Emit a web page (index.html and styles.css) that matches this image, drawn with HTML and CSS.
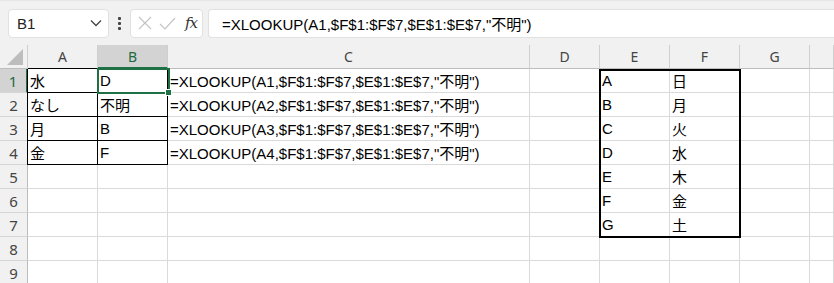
FILE: index.html
```html
<!DOCTYPE html>
<html lang="ja">
<head>
  <meta charset="UTF-8" />
  <title>XLOOKUP</title>
  <link rel="stylesheet" href="styles.css">
</head>
<body>
  <div class="toolbar">
    <div class="namebox">
      <span>B1</span>
      <svg width="12" height="8" viewBox="0 0 12 8"><path d="M1 1.5 L6 6.5 L11 1.5" fill="none" stroke="#444" stroke-width="1.3"/></svg>
    </div>
    <div class="dots"><i></i><i></i><i></i></div>
    <div class="fxbox">
      <svg width="14" height="14" viewBox="0 0 14 14"><path d="M1 1 L13 13 M13 1 L1 13" stroke="#c4c4c4" stroke-width="1.2"/></svg>
      <svg width="17" height="13" viewBox="0 0 17 13"><path d="M1 7 L6 12 L16 1" fill="none" stroke="#c4c4c4" stroke-width="1.2"/></svg>
      <span class="fx">fx</span>
    </div>
    <div class="formula">=XLOOKUP(A1,$F$1:$F$7,$E$1:$E$7,"不明")</div>
  </div>

  <div class="sheet">
    <div class="hd corner"><svg width="18" height="18" viewBox="0 0 18 18"><path d="M17 1 L17 17 L1 17 Z" fill="#bdbdbd"/></svg></div>
    <div class="hd">A</div>
    <div class="hd sel-col">B</div>
    <div class="hd">C</div>
    <div class="hd">D</div>
    <div class="hd">E</div>
    <div class="hd">F</div>
    <div class="hd">G</div>
    <div class="hd"></div>

    <div class="rh sel-row">1</div>
    <div class="c k top left">水</div>
    <div class="c k top">D</div>
    <div class="c">=XLOOKUP(A1,$F$1:$F$7,$E$1:$E$7,"不明")</div>
    <div class="c"></div>
    <div class="c">A</div>
    <div class="c">日</div>
    <div class="c"></div>
    <div class="c"></div>

    <div class="rh">2</div>
    <div class="c k left">なし</div>
    <div class="c k">不明</div>
    <div class="c">=XLOOKUP(A2,$F$1:$F$7,$E$1:$E$7,"不明")</div>
    <div class="c"></div>
    <div class="c">B</div>
    <div class="c">月</div>
    <div class="c"></div>
    <div class="c"></div>

    <div class="rh">3</div>
    <div class="c k left">月</div>
    <div class="c k">B</div>
    <div class="c">=XLOOKUP(A3,$F$1:$F$7,$E$1:$E$7,"不明")</div>
    <div class="c"></div>
    <div class="c">C</div>
    <div class="c">火</div>
    <div class="c"></div>
    <div class="c"></div>

    <div class="rh">4</div>
    <div class="c k left">金</div>
    <div class="c k">F</div>
    <div class="c">=XLOOKUP(A4,$F$1:$F$7,$E$1:$E$7,"不明")</div>
    <div class="c"></div>
    <div class="c">D</div>
    <div class="c">水</div>
    <div class="c"></div>
    <div class="c"></div>

    <div class="rh">5</div>
    <div class="c"></div><div class="c"></div><div class="c"></div><div class="c"></div>
    <div class="c">E</div><div class="c">木</div><div class="c"></div><div class="c"></div>

    <div class="rh">6</div>
    <div class="c"></div><div class="c"></div><div class="c"></div><div class="c"></div>
    <div class="c">F</div><div class="c">金</div><div class="c"></div><div class="c"></div>

    <div class="rh">7</div>
    <div class="c"></div><div class="c"></div><div class="c"></div><div class="c"></div>
    <div class="c">G</div><div class="c">土</div><div class="c"></div><div class="c"></div>

    <div class="rh">8</div>
    <div class="c"></div><div class="c"></div><div class="c"></div><div class="c"></div>
    <div class="c"></div><div class="c"></div><div class="c"></div><div class="c"></div>

    <div class="rh">9</div>
    <div class="c"></div><div class="c"></div><div class="c"></div><div class="c"></div>
    <div class="c"></div><div class="c"></div><div class="c"></div><div class="c"></div>

    <div class="table-box"></div>
    <div class="cursor"><span class="handle"></span></div>
  </div>
</body>
</html>
```

FILE: styles.css
```css
body {
  margin: 0;
  background: #fff;
  font-family: "Liberation Sans", "Noto Sans CJK JP", sans-serif;
  color: #000;
  overflow: hidden;
}
.toolbar {
  display: flex;
  align-items: center;
  height: 45px;
  padding: 0 0 0 8px;
  box-sizing: border-box;
  background: #f1f1f1;
  border-top: 1px solid #e6e6e6;
}
.namebox {
  width: 101px;
  height: 29px;
  box-sizing: border-box;
  background: #fff;
  border: 1px solid #e1e1e1;
  border-radius: 4px;
  display: flex;
  align-items: center;
  justify-content: space-between;
  padding: 0 6px 0 8px;
  font-size: 15px;
  color: #222;
}
.dots {
  width: 21px;
  display: flex;
  flex-direction: column;
  align-items: center;
  gap: 2px;
}
.dots i {
  width: 3px;
  height: 3px;
  background: #444;
  border-radius: 1px;
}
.fxbox {
  width: 73px;
  height: 29px;
  box-sizing: border-box;
  background: #fff;
  border: 1px solid #e1e1e1;
  border-radius: 4px;
  display: flex;
  align-items: center;
  padding: 0 0 0 7px;
  gap: 7px;
}
.fx {
  font-family: "DejaVu Serif", "Liberation Serif", serif;
  font-style: italic;
  font-size: 15px;
  color: #333;
  letter-spacing: -1px;
  margin-left: 2px;
}
.formula {
  flex: 1;
  height: 29px;
  margin-left: 5px;
  box-sizing: border-box;
  background: #fff;
  border: 1px solid #e1e1e1;
  border-right: none;
  border-radius: 4px 0 0 4px;
  display: flex;
  align-items: center;
  padding-left: 13px;
  font-size: 15px;
  white-space: nowrap;
}
.sheet {
  position: relative;
  display: grid;
  grid-template-columns: 28px 70px 70px 362px 70px 70px 70px 70px 24px;
  grid-template-rows: 24px repeat(9, 24px);
}
.hd, .rh {
  background: #f1f1f1;
  color: #444;
  font-family: "Noto Sans", "Liberation Sans", sans-serif;
  font-size: 14px;
  display: flex;
  align-items: center;
  justify-content: center;
  box-sizing: border-box;
}
.hd {
  border-right: 1px solid #cfcfcf;
  border-bottom: 1px solid #bdbdbd;
}
.rh {
  border-right: 1px solid #bdbdbd;
  border-bottom: 1px solid #d6d6d6;
  font-size: 15px;
}
.corner {
  justify-content: flex-end;
  align-items: flex-end;
  padding: 0 3px 2px 0;
}
.sel-col {
  background: #d3d3d3;
  color: #1e6b41;
  border-bottom: 2px solid #1e7145;
}
.sel-row {
  background: #d3d3d3;
  color: #1e6b41;
  border-right: 2px solid #1e7145;
}
.c {
  border-right: 1px solid #dadada;
  border-bottom: 1px solid #dadada;
  box-sizing: border-box;
  font-size: 15px;
  padding: 0 0 0 2px;
  display: flex;
  align-items: center;
  white-space: nowrap;
  overflow: visible;
}
.c.k {
  border-right-color: #000;
  border-bottom-color: #000;
}
.c.top {
  box-shadow: 0 -1px 0 #000;
}
.c.left {
  box-shadow: -1px 0 0 #000;
}
.c.top.left {
  box-shadow: 0 -1px 0 #000, -1px 0 0 #000;
}
.table-box {
  position: absolute;
  grid-column: 6 / 8;
  grid-row: 2 / 9;
  top: 0;
  left: -1px;
  right: -1px;
  bottom: -1px;
  border: 2px solid #000;
  pointer-events: none;
}
.cursor {
  position: absolute;
  grid-column: 3 / 4;
  grid-row: 2 / 3;
  top: -1px;
  left: -1px;
  right: -2px;
  bottom: -1px;
  border: 2px solid #1e7145;
}
.handle {
  position: absolute;
  right: -4px;
  bottom: -4px;
  width: 5px;
  height: 5px;
  background: #1e7145;
  border: 1px solid #fff;
}
```
